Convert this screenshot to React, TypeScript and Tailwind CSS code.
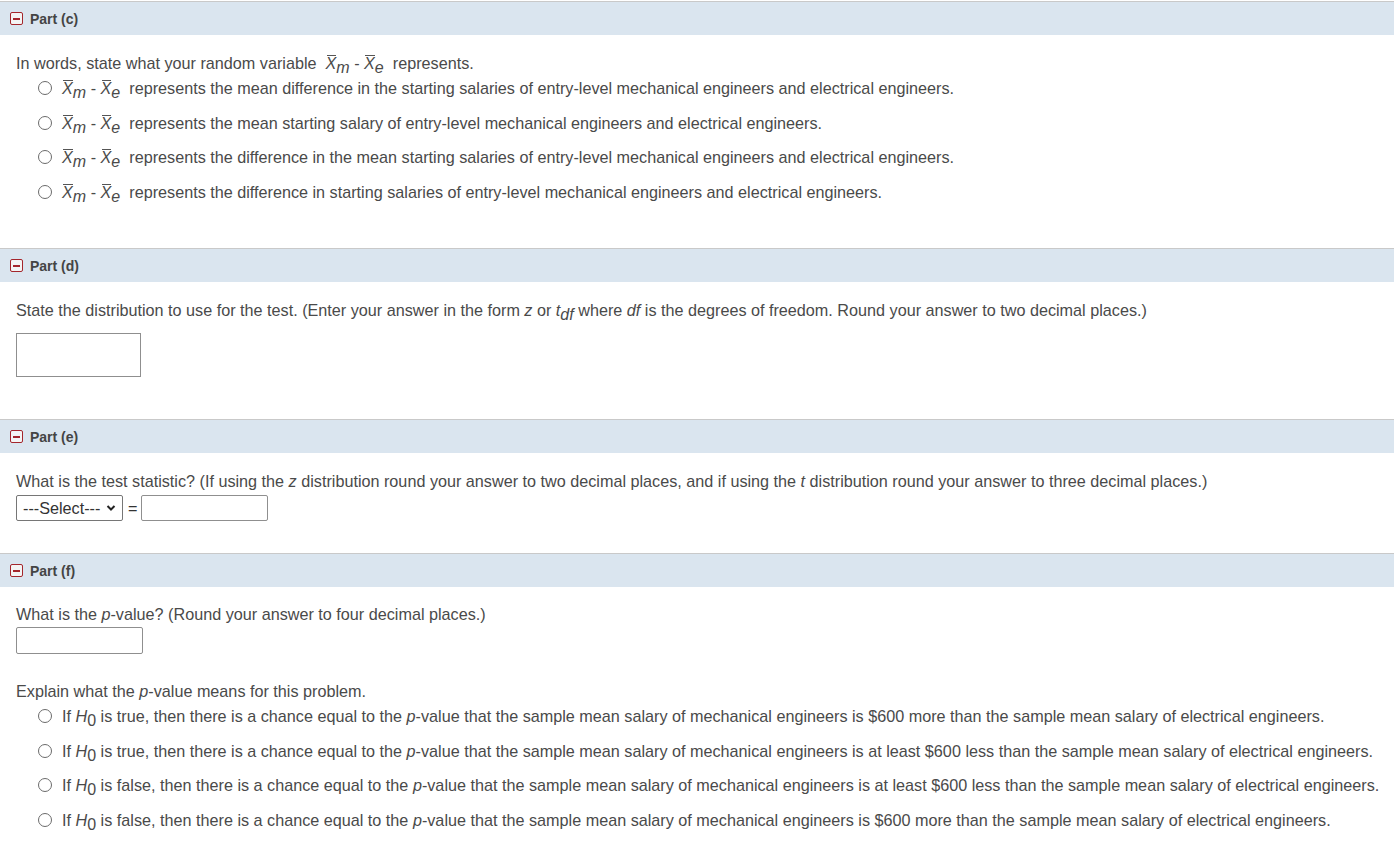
import React from "react";

const font = { fontFamily: '"Liberation Sans", Arial, sans-serif' };

function Icon() {
  return (
    <span className="flex h-[13px] w-[13px] items-center justify-center rounded-[2px] border-[1.5px] border-[#a4262c] bg-[#f4f4f4]">
      <span className="h-[2px] w-[7px] bg-[#a4262c]" />
    </span>
  );
}

function Header({ label }: { label: string }) {
  return (
    <div className="flex h-[34px] items-center gap-[7px] border-t border-[#c9c9c9] bg-[#dae5ef] pl-[10px]">
      <Icon />
      <span className="text-[14px] font-bold leading-none text-[#444]">{label}</span>
    </div>
  );
}

function Radio() {
  return <span className="inline-block h-[14px] w-[14px] shrink-0 rounded-full border border-[#6b6b6b] bg-white" />;
}

function Sub({ children, italic = true }: { children: React.ReactNode; italic?: boolean }) {
  return (
    <span className={`relative top-[4px] text-[16px] leading-none ${italic ? "italic" : ""}`}>{children}</span>
  );
}

function XBar({ sub }: { sub: string }) {
  return (
    <span className="whitespace-nowrap">
      <span className="relative italic">
        <span className="absolute left-[1px] right-[0px] top-[1px] h-[1px] bg-[#555]" />X
      </span>
      <Sub>{sub}</Sub>
    </span>
  );
}

function Diff() {
  return (
    <span>
      <XBar sub="m" /> - <XBar sub="e" />
    </span>
  );
}

function Option({ children }: { children: React.ReactNode }) {
  return (
    <div className="flex h-[20px] items-center gap-[10px] pl-[22px]">
      <Radio />
      <div className="whitespace-nowrap">{children}</div>
    </div>
  );
}

function H0() {
  return (
    <span>
      <i>H</i>
      <Sub italic={false}>0</Sub>
    </span>
  );
}

export default function App() {
  return (
    <div className="min-h-[859px] bg-white pt-[1px] text-[16.2px] leading-[20px] text-[#4a4a4a]" style={font}>
      <Header label="Part (c)" />
      <div className="px-[16px] pb-[46px] pt-[18px]">
        <div>
          In words, state what your random variable&nbsp;&nbsp;<Diff />&nbsp;&nbsp;represents.
        </div>
        <div className="mt-[5px] flex flex-col gap-[14.7px]">
          <Option>
            <Diff />&nbsp;&nbsp;represents the mean difference in the starting salaries of entry-level mechanical engineers and electrical engineers.
          </Option>
          <Option>
            <Diff />&nbsp;&nbsp;represents the mean starting salary of entry-level mechanical engineers and electrical engineers.
          </Option>
          <Option>
            <Diff />&nbsp;&nbsp;represents the difference in the mean starting salaries of entry-level mechanical engineers and electrical engineers.
          </Option>
          <Option>
            <Diff />&nbsp;&nbsp;represents the difference in starting salaries of entry-level mechanical engineers and electrical engineers.
          </Option>
        </div>
      </div>

      <Header label="Part (d)" />
      <div className="px-[16px] pb-[42px] pt-[18px]">
        <div>
          State the distribution to use for the test. (Enter your answer in the form <i>z</i> or <i>t</i>
          <Sub>df</Sub> where <i>df</i> is the degrees of freedom. Round your answer to two decimal places.)
        </div>
        <div className="mt-[13px] h-[44px] w-[125px] border border-[#8f8f8f] bg-white" />
      </div>

      <Header label="Part (e)" />
      <div className="px-[16px] pb-[32px] pt-[18px]">
        <div>
          What is the test statistic? (If using the <i>z</i> distribution round your answer to two decimal places, and if using the <i>t</i> distribution round your answer to three decimal places.)
        </div>
        <div className="mt-[4px] flex items-center">
          <div className="flex h-[26px] w-[107px] items-center justify-between rounded-[2px] border border-[#767676] pl-[6px] pr-[6px] text-[#333]">
            <span>---Select---</span>
            <svg width="10" height="10" viewBox="0 0 10 10">
              <path d="M1.5 3 L5 6.5 L8.5 3" fill="none" stroke="#222" strokeWidth="2" />
            </svg>
          </div>
          <span className="ml-[5px] mr-[4px] text-[#333]">=</span>
          <div className="h-[26px] w-[127px] rounded-[2px] border border-[#8f8f8f] bg-white" />
        </div>
      </div>

      <Header label="Part (f)" />
      <div className="px-[16px] pb-[20px] pt-[17px]">
        <div>
          What is the <i>p</i>-value? (Round your answer to four decimal places.)
        </div>
        <div className="mt-[3px] h-[27px] w-[127px] rounded-[2px] border border-[#8f8f8f] bg-white" />
        <div className="mt-[27px]">
          Explain what the <i>p</i>-value means for this problem.
        </div>
        <div className="mt-[5px] flex flex-col gap-[14.7px]">
          <Option>
            If <H0 /> is true, then there is a chance equal to the <i>p</i>-value that the sample mean salary of mechanical engineers is $600 more than the sample mean salary of electrical engineers.
          </Option>
          <Option>
            If <H0 /> is true, then there is a chance equal to the <i>p</i>-value that the sample mean salary of mechanical engineers is at least $600 less than the sample mean salary of electrical engineers.
          </Option>
          <Option>
            If <H0 /> is false, then there is a chance equal to the <i>p</i>-value that the sample mean salary of mechanical engineers is at least $600 less than the sample mean salary of electrical engineers.
          </Option>
          <Option>
            If <H0 /> is false, then there is a chance equal to the <i>p</i>-value that the sample mean salary of mechanical engineers is $600 more than the sample mean salary of electrical engineers.
          </Option>
        </div>
      </div>
    </div>
  );
}
